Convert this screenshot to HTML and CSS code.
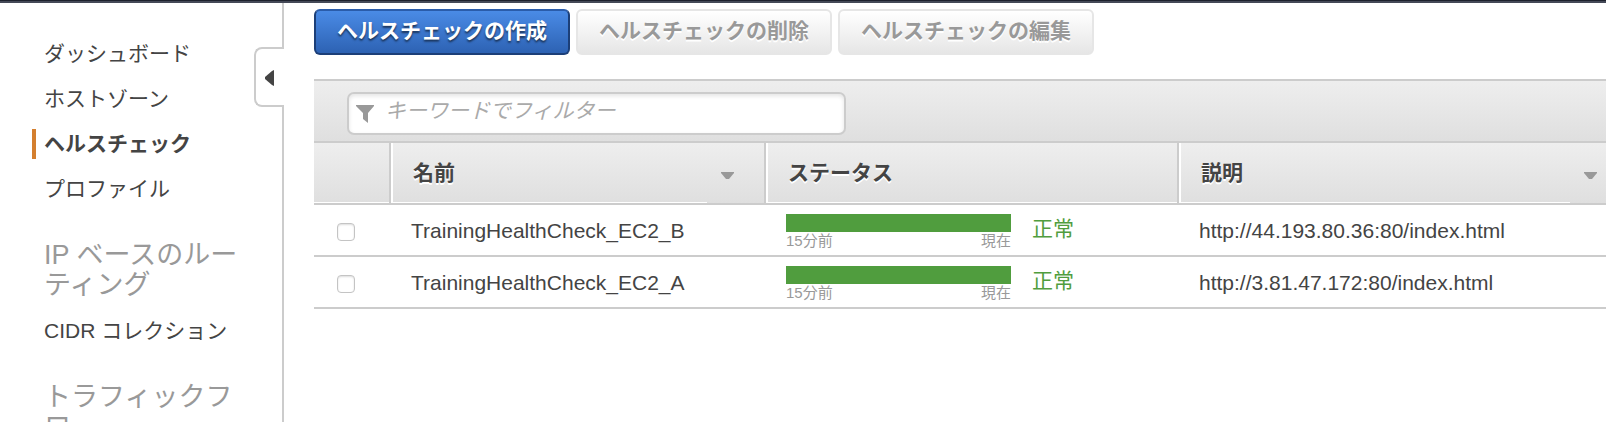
FILE: index.html
```html
<!DOCTYPE html>
<html lang="ja">
<head>
<meta charset="utf-8">
<title>ヘルスチェック</title>
<link rel="stylesheet" href="styles.css">
</head>
<body>
<div class="app">
  <header class="topbar"></header>
  <div class="layout">
    <aside class="sidebar">
      <nav class="nav">
        <a class="nav-link" href="#dashboard">ダッシュボード</a>
        <a class="nav-link" href="#zones">ホストゾーン</a>
        <a class="nav-link active" href="#health">ヘルスチェック</a>
        <a class="nav-link" href="#profile">プロファイル</a>
        <h2 class="nav-title">IP ベースのルーティング</h2>
        <a class="nav-link" href="#cidr">CIDR コレクション</a>
        <h2 class="nav-title">トラフィックフロー</h2>
      </nav>
      <button class="collapse" type="button" aria-label="サイドバーを閉じる">
        <svg width="9" height="16" viewBox="0 0 9 16" aria-hidden="true"><path d="M9 0v16L7 15 0 9V7l7-6z" fill="#444"/></svg>
      </button>
    </aside>
    <main class="main">
      <div class="actions">
        <button class="btn primary" type="button">ヘルスチェックの作成</button>
        <button class="btn" type="button" disabled>ヘルスチェックの削除</button>
        <button class="btn" type="button" disabled>ヘルスチェックの編集</button>
      </div>
      <div class="toolbar">
        <label class="filter">
          <svg width="18" height="18" viewBox="0 0 18 18" aria-hidden="true"><path d="M0 0h18v1l-6 7v10l-5-4V8L0 1z" fill="#999"/></svg>
          <input class="filter-input" type="text" placeholder="キーワードでフィルター" aria-label="キーワードでフィルター">
        </label>
      </div>
      <table class="grid">
        <colgroup><col class="col-check"><col class="col-name"><col class="col-status"><col></colgroup>
        <thead>
          <tr>
            <th></th>
            <th><div class="head"><span class="head-text">名前</span><span class="sort"><svg width="13" height="7" viewBox="0 0 13 7" aria-hidden="true"><path d="M0 0h13v1L8 7H5L0 1z" fill="#999"/></svg></span></div></th>
            <th><div class="head"><span class="head-text">ステータス</span></div></th>
            <th><div class="head"><span class="head-text">説明</span><span class="sort edge"><svg width="13" height="7" viewBox="0 0 13 7" aria-hidden="true"><path d="M0 0h13v1L8 7H5L0 1z" fill="#999"/></svg></span></div></th>
          </tr>
        </thead>
        <tbody>
          <tr>
            <td class="check-cell"><input class="check" type="checkbox" aria-label="TrainingHealthCheck_EC2_B"></td>
            <td>TrainingHealthCheck_EC2_B</td>
            <td class="status-cell"><div class="status"><div class="history"><div class="bar"></div><div class="times"><span>15分前</span><span>現在</span></div></div><span class="state">正常</span></div></td>
            <td>http://44.193.80.36:80/index.html</td>
          </tr>
          <tr>
            <td class="check-cell"><input class="check" type="checkbox" aria-label="TrainingHealthCheck_EC2_A"></td>
            <td>TrainingHealthCheck_EC2_A</td>
            <td class="status-cell"><div class="status"><div class="history"><div class="bar"></div><div class="times"><span>15分前</span><span>現在</span></div></div><span class="state">正常</span></div></td>
            <td>http://3.81.47.172:80/index.html</td>
          </tr>
        </tbody>
      </table>
    </main>
  </div>
</div>
</body>
</html>
```

FILE: styles.css
```css
* { box-sizing: border-box; }
body {
  margin: 0;
  background: #fff;
  color: #444;
  font-family: "Liberation Sans", "Noto Sans CJK JP", sans-serif;
  font-size: 21px;
}
button, input { font-family: inherit; font-size: 21px; }
svg { display: block; }

.app { display: flex; flex-direction: column; height: 100vh; overflow: hidden; }
.topbar { flex: none; height: 3px; background: #444957; border-top: 1px solid #1d212d; }
.layout { display: flex; flex: 1; min-height: 0; }

.sidebar { position: relative; flex: none; width: 284px; border-right: 2px solid #ccc; }
.nav { padding: 36px 32px 0; }
.nav-link {
  display: block;
  margin-bottom: 15px;
  padding-left: 8px;
  border-left: 4px solid transparent;
  color: #444;
  line-height: 30px;
  text-decoration: none;
}
.nav-link.active { border-left-color: #d47f2f; font-weight: bold; }
.nav-title {
  margin: 36px 0 16px;
  padding-left: 12px;
  color: #999;
  font-size: 27px;
  font-weight: normal;
  line-height: 30px;
}
.collapse {
  position: absolute;
  top: 44px;
  right: -2px;
  display: flex;
  align-items: center;
  width: 30px;
  height: 60px;
  padding: 2px 0 0 9px;
  border: 2px solid #ccc;
  border-right: 0;
  border-radius: 8px 0 0 8px;
  background: #fff;
}

.main { flex: 1; min-width: 0; padding: 6px 0 0 30px; }
.actions { display: flex; gap: 6px; margin-bottom: 24px; }
.btn {
  height: 46px;
  padding: 0 21px 3px;
  border: 2px solid #e6e6e6;
  border-radius: 6px;
  background: linear-gradient(#fff, #e6e6e6);
  color: #999;
  font-weight: bold;
  line-height: 30px;
  text-shadow: 0 2px 0 #fff;
}
.btn.primary {
  border-color: #2a5caa #1c3f78 #1c3f78;
  background: linear-gradient(#4a8be6, #2d62b3);
  color: #fff;
  text-shadow: 0 2px 2px #1a3358;
}

.toolbar {
  padding: 11px 33px 6px;
  border: solid #ccc;
  border-width: 2px 0;
  background: linear-gradient(#eee, #dfdfdf);
}
.filter {
  display: flex;
  align-items: center;
  gap: 11px;
  width: 499px;
  height: 43px;
  padding: 0 7px;
  border: 2px solid #ccc;
  border-radius: 7px;
  background: #fff;
  box-shadow: inset 0 2px 4px #e4e4e4;
}
.filter-input {
  flex: 1;
  min-width: 0;
  height: 36px;
  padding: 0 0 5px;
  border: 0;
  outline: 0;
  background: transparent;
  color: #444;
}
.filter-input::placeholder { color: #aaa; font-style: italic; opacity: 1; }

.grid { width: 100%; table-layout: fixed; border-collapse: separate; border-spacing: 0; }
.col-check { width: 77px; }
.col-name { width: 375px; }
.col-status { width: 413px; }
th {
  height: 62px;
  padding: 0;
  border-right: 2px solid #ccc;
  border-bottom: 2px solid #ccc;
  background: linear-gradient(#eee, #dfdfdf);
  box-shadow: inset 0 -1px #fff;
  text-align: left;
  text-shadow: 0 2px 0 #fff;
}
th + th { box-shadow: inset 2px 0 #fff, inset 0 -1px #fff; }
th:last-child { border-right: 0; }
.head { display: flex; align-items: center; height: 60px; padding-left: 22px; }
.head-text { flex: 1; line-height: 30px; }
.sort {
  display: flex;
  align-items: center;
  width: 57px;
  height: 60px;
  padding: 4px 0 0 14px;
  background: linear-gradient(#eee, #dfdfdf);
}
.sort.edge { width: 36px; }
td { height: 52px; padding: 2px 0 0 20px; border-bottom: 2px solid #ccc; line-height: 30px; }
.check-cell { padding-left: 23px; }
.check {
  display: block;
  appearance: none;
  width: 18px;
  height: 18px;
  margin: 2px 0 0;
  border: 1px solid #c4c4c4;
  border-radius: 4px;
  background: #fff;
  box-shadow: inset 0 1px 2px #ddd;
}
.status-cell { padding-top: 0; }
.status { display: flex; gap: 21px; height: 50px; padding-top: 9px; }
.history { width: 225px; }
.bar { height: 18px; background: #509d3e; }
.times { display: flex; justify-content: space-between; color: #999; font-size: 15px; line-height: 18px; }
.state { color: #509d3e; }
```
